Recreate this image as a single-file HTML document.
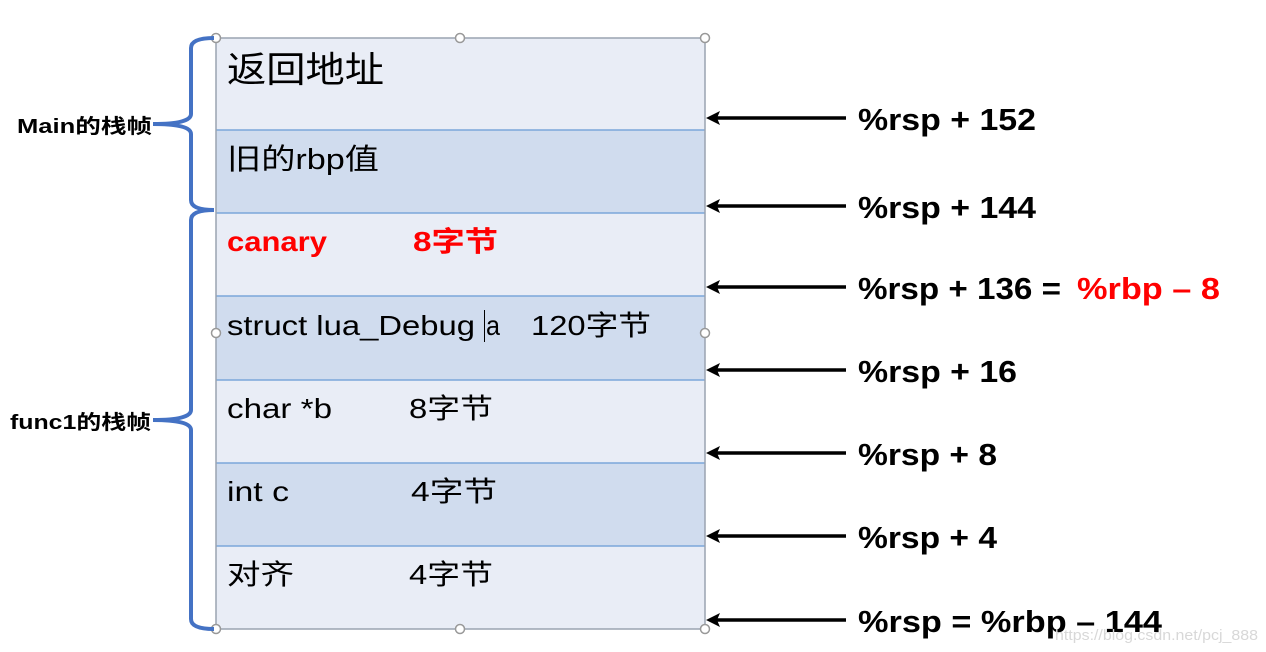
<!DOCTYPE html>
<html><head><meta charset="utf-8"><style>
html,body{margin:0;padding:0;background:#fff;}
svg{display:block}
text{font-family:"Liberation Sans","Noto Sans CJK SC",sans-serif;}
</style></head><body>
<svg width="1266" height="652" viewBox="0 0 1266 652" xmlns="http://www.w3.org/2000/svg">
<rect x="216" y="38" width="489" height="92" fill="#e9edf6"/>
<rect x="216" y="130" width="489" height="83" fill="#d0dcee"/>
<rect x="216" y="213" width="489" height="83" fill="#e9edf6"/>
<rect x="216" y="296" width="489" height="84" fill="#d0dcee"/>
<rect x="216" y="380" width="489" height="83" fill="#e9edf6"/>
<rect x="216" y="463" width="489" height="83" fill="#d0dcee"/>
<rect x="216" y="546" width="489" height="83" fill="#e9edf6"/>
<g stroke="#7ba7da" stroke-width="1.5">
<line x1="216" y1="130" x2="705" y2="130"/><line x1="216" y1="213" x2="705" y2="213"/>
<line x1="216" y1="296" x2="705" y2="296"/><line x1="216" y1="380" x2="705" y2="380"/>
<line x1="216" y1="463" x2="705" y2="463"/><line x1="216" y1="546" x2="705" y2="546"/>
</g>
<rect x="216" y="38" width="489" height="591" fill="none" stroke="#9aa3b0" stroke-width="1.5"/>
<g fill="#fff" stroke="#999" stroke-width="1.5">
<circle cx="216" cy="38" r="4.5"/><circle cx="460" cy="38" r="4.5"/><circle cx="705" cy="38" r="4.5"/>
<circle cx="216" cy="333" r="4.5"/><circle cx="705" cy="333" r="4.5"/>
<circle cx="216" cy="629" r="4.5"/><circle cx="460" cy="629" r="4.5"/><circle cx="705" cy="629" r="4.5"/>
</g>
<!-- braces -->
<g fill="none" stroke="#4472c4" stroke-width="4">
<path d="M214 38 Q191 38 191 48 L191 114 Q191 124 153 124 Q191 124 191 134 L191 200 Q191 210 214 210"/>
<path d="M214 210 Q191 210 191 220 L191 410 Q191 420 153 420 Q191 420 191 430 L191 619 Q191 629 214 629"/>
</g>
<text x="17" y="133" font-size="20" font-weight="bold" textLength="135" lengthAdjust="spacingAndGlyphs">Main的栈帧</text>
<text x="10" y="429" font-size="20" font-weight="bold" textLength="141" lengthAdjust="spacingAndGlyphs">func1的栈帧</text>
<!-- row text -->
<text x="227" y="82" font-size="36" textLength="157" lengthAdjust="spacingAndGlyphs">返回地址</text>
<text x="227" y="169" font-size="29" textLength="152" lengthAdjust="spacingAndGlyphs">旧的rbp值</text>
<g fill="#ff0000" font-weight="bold" font-size="28">
<text x="227" y="251" textLength="100" lengthAdjust="spacingAndGlyphs">canary</text>
<text x="413" y="251" textLength="85" lengthAdjust="spacingAndGlyphs">8字节</text>
</g>
<g font-size="28">
<text x="227" y="335" textLength="248" lengthAdjust="spacingAndGlyphs">struct lua_Debug</text>
<text x="486" y="335" textLength="14" lengthAdjust="spacingAndGlyphs">a</text>
<text x="531" y="335" textLength="120" lengthAdjust="spacingAndGlyphs">120字节</text>
<text x="227" y="418" textLength="105" lengthAdjust="spacingAndGlyphs">char *b</text>
<text x="409" y="418" textLength="84" lengthAdjust="spacingAndGlyphs">8字节</text>
<text x="227" y="501" textLength="62" lengthAdjust="spacingAndGlyphs">int c</text>
<text x="411" y="501" textLength="86" lengthAdjust="spacingAndGlyphs">4字节</text>
<text x="227" y="584" textLength="67" lengthAdjust="spacingAndGlyphs">对齐</text>
<text x="409" y="584" textLength="84" lengthAdjust="spacingAndGlyphs">4字节</text>
</g>
<line x1="484.5" y1="310" x2="484.5" y2="342" stroke="#000" stroke-width="1"/>
<!-- arrows -->
<g stroke="#000" stroke-width="3.5">
<line x1="716" y1="118" x2="846" y2="118"/><line x1="716" y1="206" x2="846" y2="206"/>
<line x1="716" y1="287" x2="846" y2="287"/><line x1="716" y1="370" x2="846" y2="370"/>
<line x1="716" y1="453" x2="846" y2="453"/><line x1="716" y1="536" x2="846" y2="536"/>
<line x1="716" y1="620" x2="846" y2="620"/>
</g>
<g fill="#000">
<path d="M706 118 L720 111 L717 118 L720 125Z"/><path d="M706 206 L720 199 L717 206 L720 213Z"/>
<path d="M706 287 L720 280 L717 287 L720 294Z"/><path d="M706 370 L720 363 L717 370 L720 377Z"/>
<path d="M706 453 L720 446 L717 453 L720 460Z"/><path d="M706 536 L720 529 L717 536 L720 543Z"/>
<path d="M706 620 L720 613 L717 620 L720 627Z"/>
</g>
<g font-size="31" font-weight="bold">
<text x="858" y="130" textLength="178" lengthAdjust="spacingAndGlyphs">%rsp + 152</text>
<text x="858" y="218" textLength="178" lengthAdjust="spacingAndGlyphs">%rsp + 144</text>
<text x="858" y="299" textLength="203" lengthAdjust="spacingAndGlyphs">%rsp + 136 =</text>
<text x="1077" y="299" fill="#ff0000" textLength="143" lengthAdjust="spacingAndGlyphs">%rbp – 8</text>
<text x="858" y="382" textLength="159" lengthAdjust="spacingAndGlyphs">%rsp + 16</text>
<text x="858" y="465" textLength="139" lengthAdjust="spacingAndGlyphs">%rsp + 8</text>
<text x="858" y="548" textLength="139" lengthAdjust="spacingAndGlyphs">%rsp + 4</text>
<text x="858" y="632" textLength="304" lengthAdjust="spacingAndGlyphs">%rsp = %rbp – 144</text>
</g>
<text x="1055" y="640" font-size="15" fill="#d8d8d8" textLength="203" lengthAdjust="spacingAndGlyphs">https://blog.csdn.net/pcj_888</text>
</svg>
</body></html>
